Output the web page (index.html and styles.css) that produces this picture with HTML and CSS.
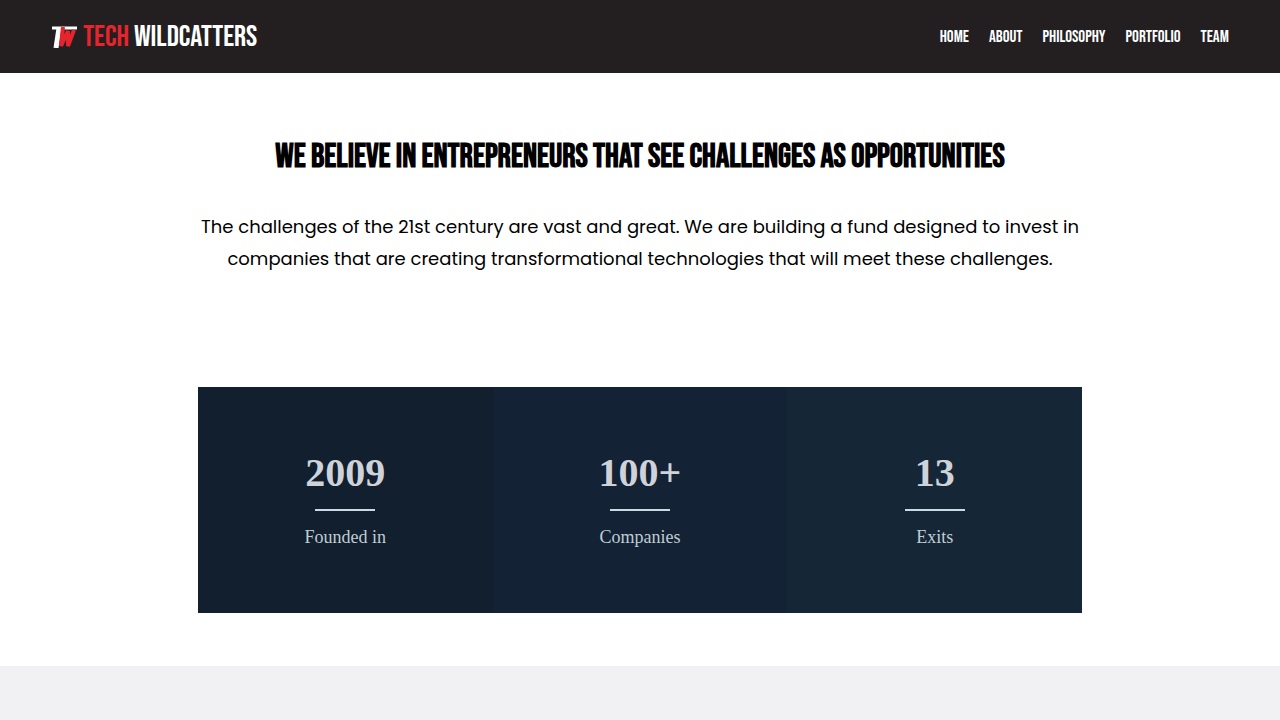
FILE: index.html
```html
<!DOCTYPE html>
<html lang="en">
<head>
<meta charset="utf-8">
<meta name="viewport" content="width=device-width, initial-scale=1">
<title>Tech Wildcatters</title>
<link rel="stylesheet" href="styles.css">
</head>
<body>
<header class="site-header">
  <a class="logo" href="#">
    <svg class="logo-mark" viewBox="0 0 26 22" aria-hidden="true">
      <g fill="none" stroke="#fff">
        <line x1="1" y1="2" x2="26" y2="2" stroke-width="3"/>
        <line x1="8" y1="2" x2="5" y2="22" stroke-width="5"/>
      </g>
      <polyline points="12,1 10,20 17,5 17,20 23,4" fill="none" stroke="#e5252b" stroke-width="4" stroke-linejoin="bevel"/>
    </svg>
    <span class="logo-name"><span class="logo-red">TECH</span> WILDCATTERS</span>
  </a>
  <nav class="site-nav">
    <a href="#">HOME</a>
    <a href="#">ABOUT</a>
    <a href="#">PHILOSOPHY</a>
    <a href="#">PORTFOLIO</a>
    <a href="#">TEAM</a>
  </nav>
</header>
<main>
  <section class="intro">
    <h1>WE BELIEVE IN ENTREPRENEURS THAT SEE CHALLENGES AS OPPORTUNITIES</h1>
    <p>The challenges of the 21st century are vast and great. We are building a fund designed to invest in<br>companies that are creating transformational technologies that will meet these challenges.</p>
  </section>
  <section class="stats">
    <div class="stat"><strong>2009</strong><span>Founded in</span></div>
    <div class="stat"><strong>100+</strong><span>Companies</span></div>
    <div class="stat"><strong>13</strong><span>Exits</span></div>
  </section>
</main>
<div class="next-section"></div>
</body>
</html>
```
FILE: styles.css
```css
* { box-sizing: border-box; }

body {
  margin: 0;
  min-height: 100vh;
  display: flex;
  flex-direction: column;
  background: #fff;
  color: #000;
  font-family: "Liberation Serif", serif;
}

.site-header {
  display: flex;
  align-items: center;
  justify-content: space-between;
  padding: 16px 4%;
  min-height: 73px;
  background: #231f20;
  font-family: "Bebas Neue", "Roboto Condensed", Roboto, sans-serif;
}

.site-header a { color: #fff; text-decoration: none; }

.logo { display: flex; align-items: center; gap: 6px; }
.logo-mark { width: 26px; height: 22px; }
.logo-name { font-size: 30px; font-weight: 400; line-height: 34px; white-space: nowrap; }
.logo-red { color: #e5252b; }

.site-nav { display: flex; gap: 20px; font-size: 17px; line-height: 34px; }

main {
  width: 100%;
  max-width: 884px;
  margin: 0 auto;
  padding: 64px 0 53px;
}

.intro { text-align: center; }

h1 {
  margin: 0;
  font-family: "Bebas Neue", "Roboto Condensed", Roboto, sans-serif;
  font-size: 33px;
  line-height: 40px;
  font-weight: 700;
}

.intro p {
  margin: 34px 0 112px;
  font-family: Poppins, Inter, sans-serif;
  font-size: 18px;
  line-height: 32px;
}

.stats {
  display: grid;
  grid-template-columns: repeat(3, 1fr);
  color: #cfd2d8;
  text-align: center;
}

.stat {
  display: flex;
  flex-direction: column;
  align-items: center;
  padding: 60px 16px;
  background: #111f2e;
}
.stat:nth-child(2) { background: #132235; }
.stat:nth-child(3) { background: #152637; }

.stat strong { font-size: 40px; line-height: 52px; }
.stat strong::after {
  content: "";
  display: block;
  width: 60px;
  height: 2px;
  margin: 10px auto 0;
  background: #c9dae3;
}
.stat span { margin-top: 10px; font-size: 18px; line-height: 32px; color: #c0cdd3; }

.next-section { flex: 1; min-height: 48px; background: #f1f1f4; }
```
